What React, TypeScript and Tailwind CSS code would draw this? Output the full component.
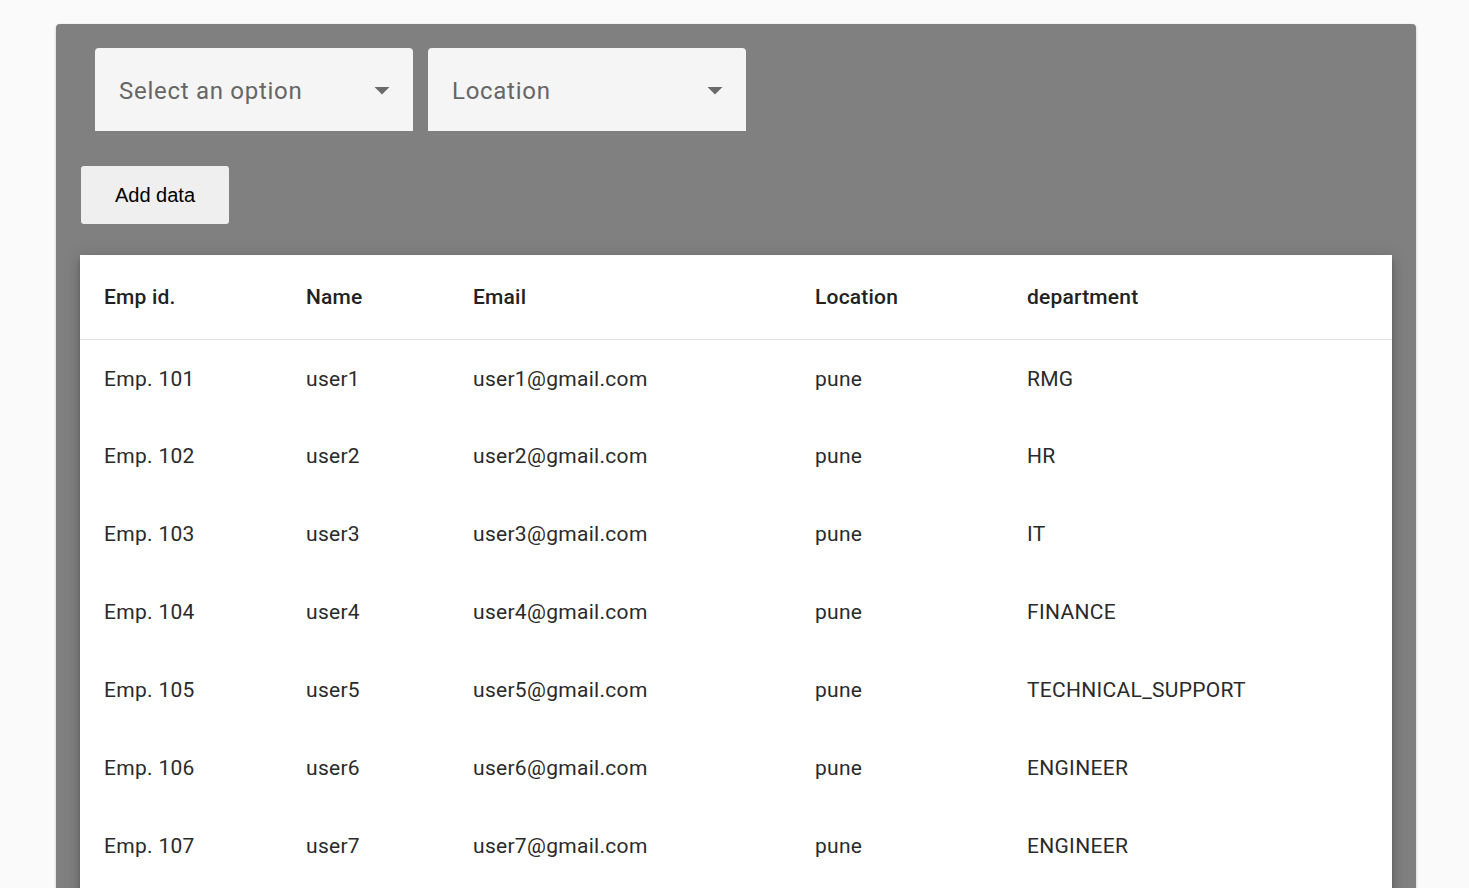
import React from "react";

const rows = [
  { id: "Emp. 101", name: "user1", email: "user1@gmail.com", location: "pune", dept: "RMG" },
  { id: "Emp. 102", name: "user2", email: "user2@gmail.com", location: "pune", dept: "HR" },
  { id: "Emp. 103", name: "user3", email: "user3@gmail.com", location: "pune", dept: "IT" },
  { id: "Emp. 104", name: "user4", email: "user4@gmail.com", location: "pune", dept: "FINANCE" },
  { id: "Emp. 105", name: "user5", email: "user5@gmail.com", location: "pune", dept: "TECHNICAL_SUPPORT" },
  { id: "Emp. 106", name: "user6", email: "user6@gmail.com", location: "pune", dept: "ENGINEER" },
  { id: "Emp. 107", name: "user7", email: "user7@gmail.com", location: "pune", dept: "ENGINEER" },
  { id: "Emp. 108", name: "user8", email: "user8@gmail.com", location: "pune", dept: "ENGINEER" },
];

const SelectBox: React.FC<{ label: string }> = ({ label }) => (
  <div className="w-[318px] h-[83px] bg-[#f5f5f5] rounded-t-[4px] flex items-center justify-between pl-6 pr-[13px] cursor-pointer">
    <span className="text-[24px] tracking-[0.72px] text-[#666666] pt-[2px]">{label}</span>
    <svg width="36" height="36" viewBox="0 0 24 24" className="fill-[#6b6b6b]">
      <path d="M7 10l5 5 5-5z" />
    </svg>
  </div>
);

const App: React.FC = () => {
  return (
    <div className="bg-[#fafafa] font-['Roboto',sans-serif] pt-6 pl-14 pr-[53px] overflow-hidden h-[888px]">
      <div className="bg-[#808080] rounded-[4px] shadow-[0_1px_3px_rgba(0,0,0,0.2),0_1px_1px_rgba(0,0,0,0.14)] px-6 pt-6 pb-6">
        <div className="flex gap-[15px] pl-[15px]">
          <SelectBox label="Select an option" />
          <SelectBox label="Location" />
        </div>

        <button className="mt-[35px] ml-[1px] w-[148px] h-[58px] bg-[#efefef] rounded-[3px] text-[20px] text-black font-['Liberation_Sans',Arial,sans-serif]">
          Add data
        </button>

        <div className="mt-[31px] bg-white shadow-[0_3px_5px_-1px_rgba(0,0,0,0.2),0_6px_10px_0_rgba(0,0,0,0.14),0_1px_18px_0_rgba(0,0,0,0.12)]">
          <table className="w-full table-fixed border-collapse text-left">
            <colgroup>
              <col className="w-[202px]" />
              <col className="w-[167px]" />
              <col className="w-[342px]" />
              <col className="w-[212px]" />
              <col />
            </colgroup>
            <thead>
              <tr className="h-[84px] border-b border-[#e0e0e0] text-[21px] tracking-[0.2px] text-[#222222]">
                <th className="pl-6 pt-[2px] font-medium">Emp id.</th>
                <th className="pl-6 pt-[2px] font-medium">Name</th>
                <th className="pl-6 pt-[2px] font-medium">Email</th>
                <th className="pl-6 pt-[2px] font-medium">Location</th>
                <th className="pl-6 pt-[2px] font-medium">department</th>
              </tr>
            </thead>
            <tbody>
              {rows.map((r) => (
                <tr key={r.id} className="h-[78px] text-[21px] text-[#2a2a2a] tracking-[0.3px]">
                  <td className="pl-6 pt-[2px]">{r.id}</td>
                  <td className="pl-6 pt-[2px]">{r.name}</td>
                  <td className="pl-6 pt-[2px]">{r.email}</td>
                  <td className="pl-6 pt-[2px]">{r.location}</td>
                  <td className="pl-6 pt-[2px]">{r.dept}</td>
                </tr>
              ))}
            </tbody>
          </table>
        </div>
      </div>
    </div>
  );
};

export default App;
